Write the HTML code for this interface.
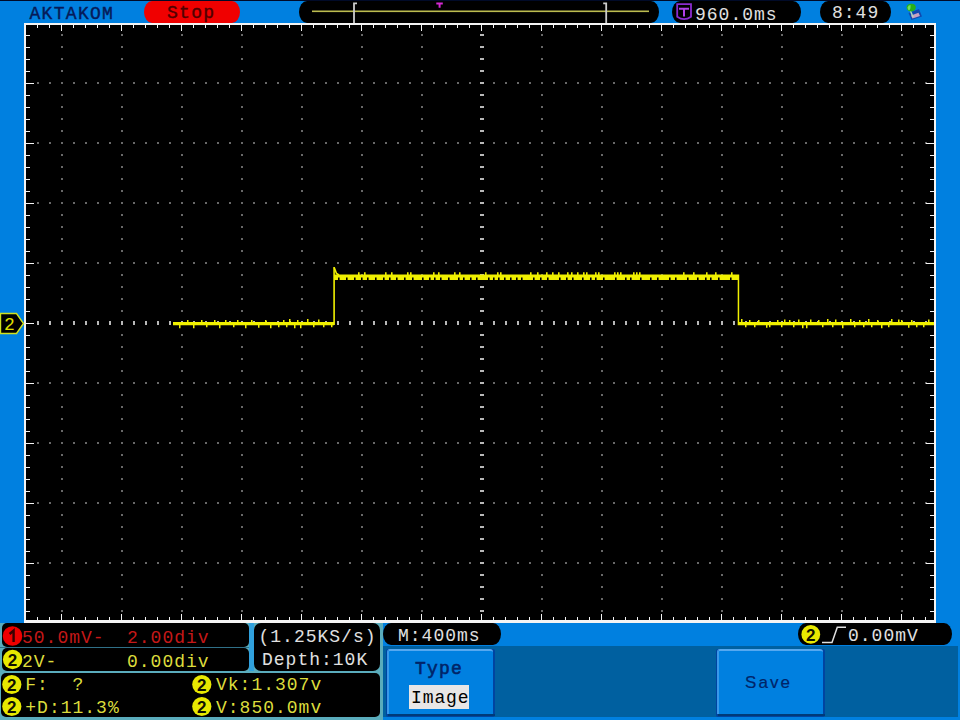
<!DOCTYPE html>
<html><head><meta charset="utf-8"><style>
html,body{margin:0;padding:0;}
body{width:960px;height:720px;overflow:hidden;position:relative;background:#0080e0;font-family:"Liberation Mono",monospace;}
.a{position:absolute;}
.t{position:absolute;font-family:"Liberation Mono",monospace;font-size:18px;letter-spacing:1px;line-height:18px;white-space:pre;}
svg{position:absolute;left:0;top:0;}
</style></head><body>

<div class="a" style="left:0;top:0;width:960px;height:1px;background:#000a28"></div>
<svg width="960" height="720" viewBox="0 0 960 720" shape-rendering="crispEdges">
<rect x="24" y="23" width="912" height="599" fill="#000"/>
<path d="M61 34h2v2h-2zM61 46h2v2h-2zM61 58h2v2h-2zM61 70h2v2h-2zM61 82h2v2h-2zM61 94h2v2h-2zM61 106h2v2h-2zM61 118h2v2h-2zM61 130h2v2h-2zM61 142h2v2h-2zM61 154h2v2h-2zM61 166h2v2h-2zM61 178h2v2h-2zM61 190h2v2h-2zM61 202h2v2h-2zM61 214h2v2h-2zM61 226h2v2h-2zM61 238h2v2h-2zM61 250h2v2h-2zM61 262h2v2h-2zM61 274h2v2h-2zM61 286h2v2h-2zM61 298h2v2h-2zM61 310h2v2h-2zM61 322h2v2h-2zM61 334h2v2h-2zM61 346h2v2h-2zM61 358h2v2h-2zM61 370h2v2h-2zM61 382h2v2h-2zM61 394h2v2h-2zM61 406h2v2h-2zM61 418h2v2h-2zM61 430h2v2h-2zM61 442h2v2h-2zM61 454h2v2h-2zM61 466h2v2h-2zM61 478h2v2h-2zM61 490h2v2h-2zM61 502h2v2h-2zM61 514h2v2h-2zM61 526h2v2h-2zM61 538h2v2h-2zM61 550h2v2h-2zM61 562h2v2h-2zM61 574h2v2h-2zM61 586h2v2h-2zM61 598h2v2h-2zM61 610h2v2h-2zM121 34h2v2h-2zM121 46h2v2h-2zM121 58h2v2h-2zM121 70h2v2h-2zM121 82h2v2h-2zM121 94h2v2h-2zM121 106h2v2h-2zM121 118h2v2h-2zM121 130h2v2h-2zM121 142h2v2h-2zM121 154h2v2h-2zM121 166h2v2h-2zM121 178h2v2h-2zM121 190h2v2h-2zM121 202h2v2h-2zM121 214h2v2h-2zM121 226h2v2h-2zM121 238h2v2h-2zM121 250h2v2h-2zM121 262h2v2h-2zM121 274h2v2h-2zM121 286h2v2h-2zM121 298h2v2h-2zM121 310h2v2h-2zM121 322h2v2h-2zM121 334h2v2h-2zM121 346h2v2h-2zM121 358h2v2h-2zM121 370h2v2h-2zM121 382h2v2h-2zM121 394h2v2h-2zM121 406h2v2h-2zM121 418h2v2h-2zM121 430h2v2h-2zM121 442h2v2h-2zM121 454h2v2h-2zM121 466h2v2h-2zM121 478h2v2h-2zM121 490h2v2h-2zM121 502h2v2h-2zM121 514h2v2h-2zM121 526h2v2h-2zM121 538h2v2h-2zM121 550h2v2h-2zM121 562h2v2h-2zM121 574h2v2h-2zM121 586h2v2h-2zM121 598h2v2h-2zM121 610h2v2h-2zM181 34h2v2h-2zM181 46h2v2h-2zM181 58h2v2h-2zM181 70h2v2h-2zM181 82h2v2h-2zM181 94h2v2h-2zM181 106h2v2h-2zM181 118h2v2h-2zM181 130h2v2h-2zM181 142h2v2h-2zM181 154h2v2h-2zM181 166h2v2h-2zM181 178h2v2h-2zM181 190h2v2h-2zM181 202h2v2h-2zM181 214h2v2h-2zM181 226h2v2h-2zM181 238h2v2h-2zM181 250h2v2h-2zM181 262h2v2h-2zM181 274h2v2h-2zM181 286h2v2h-2zM181 298h2v2h-2zM181 310h2v2h-2zM181 322h2v2h-2zM181 334h2v2h-2zM181 346h2v2h-2zM181 358h2v2h-2zM181 370h2v2h-2zM181 382h2v2h-2zM181 394h2v2h-2zM181 406h2v2h-2zM181 418h2v2h-2zM181 430h2v2h-2zM181 442h2v2h-2zM181 454h2v2h-2zM181 466h2v2h-2zM181 478h2v2h-2zM181 490h2v2h-2zM181 502h2v2h-2zM181 514h2v2h-2zM181 526h2v2h-2zM181 538h2v2h-2zM181 550h2v2h-2zM181 562h2v2h-2zM181 574h2v2h-2zM181 586h2v2h-2zM181 598h2v2h-2zM181 610h2v2h-2zM241 34h2v2h-2zM241 46h2v2h-2zM241 58h2v2h-2zM241 70h2v2h-2zM241 82h2v2h-2zM241 94h2v2h-2zM241 106h2v2h-2zM241 118h2v2h-2zM241 130h2v2h-2zM241 142h2v2h-2zM241 154h2v2h-2zM241 166h2v2h-2zM241 178h2v2h-2zM241 190h2v2h-2zM241 202h2v2h-2zM241 214h2v2h-2zM241 226h2v2h-2zM241 238h2v2h-2zM241 250h2v2h-2zM241 262h2v2h-2zM241 274h2v2h-2zM241 286h2v2h-2zM241 298h2v2h-2zM241 310h2v2h-2zM241 322h2v2h-2zM241 334h2v2h-2zM241 346h2v2h-2zM241 358h2v2h-2zM241 370h2v2h-2zM241 382h2v2h-2zM241 394h2v2h-2zM241 406h2v2h-2zM241 418h2v2h-2zM241 430h2v2h-2zM241 442h2v2h-2zM241 454h2v2h-2zM241 466h2v2h-2zM241 478h2v2h-2zM241 490h2v2h-2zM241 502h2v2h-2zM241 514h2v2h-2zM241 526h2v2h-2zM241 538h2v2h-2zM241 550h2v2h-2zM241 562h2v2h-2zM241 574h2v2h-2zM241 586h2v2h-2zM241 598h2v2h-2zM241 610h2v2h-2zM301 34h2v2h-2zM301 46h2v2h-2zM301 58h2v2h-2zM301 70h2v2h-2zM301 82h2v2h-2zM301 94h2v2h-2zM301 106h2v2h-2zM301 118h2v2h-2zM301 130h2v2h-2zM301 142h2v2h-2zM301 154h2v2h-2zM301 166h2v2h-2zM301 178h2v2h-2zM301 190h2v2h-2zM301 202h2v2h-2zM301 214h2v2h-2zM301 226h2v2h-2zM301 238h2v2h-2zM301 250h2v2h-2zM301 262h2v2h-2zM301 274h2v2h-2zM301 286h2v2h-2zM301 298h2v2h-2zM301 310h2v2h-2zM301 322h2v2h-2zM301 334h2v2h-2zM301 346h2v2h-2zM301 358h2v2h-2zM301 370h2v2h-2zM301 382h2v2h-2zM301 394h2v2h-2zM301 406h2v2h-2zM301 418h2v2h-2zM301 430h2v2h-2zM301 442h2v2h-2zM301 454h2v2h-2zM301 466h2v2h-2zM301 478h2v2h-2zM301 490h2v2h-2zM301 502h2v2h-2zM301 514h2v2h-2zM301 526h2v2h-2zM301 538h2v2h-2zM301 550h2v2h-2zM301 562h2v2h-2zM301 574h2v2h-2zM301 586h2v2h-2zM301 598h2v2h-2zM301 610h2v2h-2zM361 34h2v2h-2zM361 46h2v2h-2zM361 58h2v2h-2zM361 70h2v2h-2zM361 82h2v2h-2zM361 94h2v2h-2zM361 106h2v2h-2zM361 118h2v2h-2zM361 130h2v2h-2zM361 142h2v2h-2zM361 154h2v2h-2zM361 166h2v2h-2zM361 178h2v2h-2zM361 190h2v2h-2zM361 202h2v2h-2zM361 214h2v2h-2zM361 226h2v2h-2zM361 238h2v2h-2zM361 250h2v2h-2zM361 262h2v2h-2zM361 274h2v2h-2zM361 286h2v2h-2zM361 298h2v2h-2zM361 310h2v2h-2zM361 322h2v2h-2zM361 334h2v2h-2zM361 346h2v2h-2zM361 358h2v2h-2zM361 370h2v2h-2zM361 382h2v2h-2zM361 394h2v2h-2zM361 406h2v2h-2zM361 418h2v2h-2zM361 430h2v2h-2zM361 442h2v2h-2zM361 454h2v2h-2zM361 466h2v2h-2zM361 478h2v2h-2zM361 490h2v2h-2zM361 502h2v2h-2zM361 514h2v2h-2zM361 526h2v2h-2zM361 538h2v2h-2zM361 550h2v2h-2zM361 562h2v2h-2zM361 574h2v2h-2zM361 586h2v2h-2zM361 598h2v2h-2zM361 610h2v2h-2zM421 34h2v2h-2zM421 46h2v2h-2zM421 58h2v2h-2zM421 70h2v2h-2zM421 82h2v2h-2zM421 94h2v2h-2zM421 106h2v2h-2zM421 118h2v2h-2zM421 130h2v2h-2zM421 142h2v2h-2zM421 154h2v2h-2zM421 166h2v2h-2zM421 178h2v2h-2zM421 190h2v2h-2zM421 202h2v2h-2zM421 214h2v2h-2zM421 226h2v2h-2zM421 238h2v2h-2zM421 250h2v2h-2zM421 262h2v2h-2zM421 274h2v2h-2zM421 286h2v2h-2zM421 298h2v2h-2zM421 310h2v2h-2zM421 322h2v2h-2zM421 334h2v2h-2zM421 346h2v2h-2zM421 358h2v2h-2zM421 370h2v2h-2zM421 382h2v2h-2zM421 394h2v2h-2zM421 406h2v2h-2zM421 418h2v2h-2zM421 430h2v2h-2zM421 442h2v2h-2zM421 454h2v2h-2zM421 466h2v2h-2zM421 478h2v2h-2zM421 490h2v2h-2zM421 502h2v2h-2zM421 514h2v2h-2zM421 526h2v2h-2zM421 538h2v2h-2zM421 550h2v2h-2zM421 562h2v2h-2zM421 574h2v2h-2zM421 586h2v2h-2zM421 598h2v2h-2zM421 610h2v2h-2zM541 34h2v2h-2zM541 46h2v2h-2zM541 58h2v2h-2zM541 70h2v2h-2zM541 82h2v2h-2zM541 94h2v2h-2zM541 106h2v2h-2zM541 118h2v2h-2zM541 130h2v2h-2zM541 142h2v2h-2zM541 154h2v2h-2zM541 166h2v2h-2zM541 178h2v2h-2zM541 190h2v2h-2zM541 202h2v2h-2zM541 214h2v2h-2zM541 226h2v2h-2zM541 238h2v2h-2zM541 250h2v2h-2zM541 262h2v2h-2zM541 274h2v2h-2zM541 286h2v2h-2zM541 298h2v2h-2zM541 310h2v2h-2zM541 322h2v2h-2zM541 334h2v2h-2zM541 346h2v2h-2zM541 358h2v2h-2zM541 370h2v2h-2zM541 382h2v2h-2zM541 394h2v2h-2zM541 406h2v2h-2zM541 418h2v2h-2zM541 430h2v2h-2zM541 442h2v2h-2zM541 454h2v2h-2zM541 466h2v2h-2zM541 478h2v2h-2zM541 490h2v2h-2zM541 502h2v2h-2zM541 514h2v2h-2zM541 526h2v2h-2zM541 538h2v2h-2zM541 550h2v2h-2zM541 562h2v2h-2zM541 574h2v2h-2zM541 586h2v2h-2zM541 598h2v2h-2zM541 610h2v2h-2zM601 34h2v2h-2zM601 46h2v2h-2zM601 58h2v2h-2zM601 70h2v2h-2zM601 82h2v2h-2zM601 94h2v2h-2zM601 106h2v2h-2zM601 118h2v2h-2zM601 130h2v2h-2zM601 142h2v2h-2zM601 154h2v2h-2zM601 166h2v2h-2zM601 178h2v2h-2zM601 190h2v2h-2zM601 202h2v2h-2zM601 214h2v2h-2zM601 226h2v2h-2zM601 238h2v2h-2zM601 250h2v2h-2zM601 262h2v2h-2zM601 274h2v2h-2zM601 286h2v2h-2zM601 298h2v2h-2zM601 310h2v2h-2zM601 322h2v2h-2zM601 334h2v2h-2zM601 346h2v2h-2zM601 358h2v2h-2zM601 370h2v2h-2zM601 382h2v2h-2zM601 394h2v2h-2zM601 406h2v2h-2zM601 418h2v2h-2zM601 430h2v2h-2zM601 442h2v2h-2zM601 454h2v2h-2zM601 466h2v2h-2zM601 478h2v2h-2zM601 490h2v2h-2zM601 502h2v2h-2zM601 514h2v2h-2zM601 526h2v2h-2zM601 538h2v2h-2zM601 550h2v2h-2zM601 562h2v2h-2zM601 574h2v2h-2zM601 586h2v2h-2zM601 598h2v2h-2zM601 610h2v2h-2zM661 34h2v2h-2zM661 46h2v2h-2zM661 58h2v2h-2zM661 70h2v2h-2zM661 82h2v2h-2zM661 94h2v2h-2zM661 106h2v2h-2zM661 118h2v2h-2zM661 130h2v2h-2zM661 142h2v2h-2zM661 154h2v2h-2zM661 166h2v2h-2zM661 178h2v2h-2zM661 190h2v2h-2zM661 202h2v2h-2zM661 214h2v2h-2zM661 226h2v2h-2zM661 238h2v2h-2zM661 250h2v2h-2zM661 262h2v2h-2zM661 274h2v2h-2zM661 286h2v2h-2zM661 298h2v2h-2zM661 310h2v2h-2zM661 322h2v2h-2zM661 334h2v2h-2zM661 346h2v2h-2zM661 358h2v2h-2zM661 370h2v2h-2zM661 382h2v2h-2zM661 394h2v2h-2zM661 406h2v2h-2zM661 418h2v2h-2zM661 430h2v2h-2zM661 442h2v2h-2zM661 454h2v2h-2zM661 466h2v2h-2zM661 478h2v2h-2zM661 490h2v2h-2zM661 502h2v2h-2zM661 514h2v2h-2zM661 526h2v2h-2zM661 538h2v2h-2zM661 550h2v2h-2zM661 562h2v2h-2zM661 574h2v2h-2zM661 586h2v2h-2zM661 598h2v2h-2zM661 610h2v2h-2zM721 34h2v2h-2zM721 46h2v2h-2zM721 58h2v2h-2zM721 70h2v2h-2zM721 82h2v2h-2zM721 94h2v2h-2zM721 106h2v2h-2zM721 118h2v2h-2zM721 130h2v2h-2zM721 142h2v2h-2zM721 154h2v2h-2zM721 166h2v2h-2zM721 178h2v2h-2zM721 190h2v2h-2zM721 202h2v2h-2zM721 214h2v2h-2zM721 226h2v2h-2zM721 238h2v2h-2zM721 250h2v2h-2zM721 262h2v2h-2zM721 274h2v2h-2zM721 286h2v2h-2zM721 298h2v2h-2zM721 310h2v2h-2zM721 322h2v2h-2zM721 334h2v2h-2zM721 346h2v2h-2zM721 358h2v2h-2zM721 370h2v2h-2zM721 382h2v2h-2zM721 394h2v2h-2zM721 406h2v2h-2zM721 418h2v2h-2zM721 430h2v2h-2zM721 442h2v2h-2zM721 454h2v2h-2zM721 466h2v2h-2zM721 478h2v2h-2zM721 490h2v2h-2zM721 502h2v2h-2zM721 514h2v2h-2zM721 526h2v2h-2zM721 538h2v2h-2zM721 550h2v2h-2zM721 562h2v2h-2zM721 574h2v2h-2zM721 586h2v2h-2zM721 598h2v2h-2zM721 610h2v2h-2zM781 34h2v2h-2zM781 46h2v2h-2zM781 58h2v2h-2zM781 70h2v2h-2zM781 82h2v2h-2zM781 94h2v2h-2zM781 106h2v2h-2zM781 118h2v2h-2zM781 130h2v2h-2zM781 142h2v2h-2zM781 154h2v2h-2zM781 166h2v2h-2zM781 178h2v2h-2zM781 190h2v2h-2zM781 202h2v2h-2zM781 214h2v2h-2zM781 226h2v2h-2zM781 238h2v2h-2zM781 250h2v2h-2zM781 262h2v2h-2zM781 274h2v2h-2zM781 286h2v2h-2zM781 298h2v2h-2zM781 310h2v2h-2zM781 322h2v2h-2zM781 334h2v2h-2zM781 346h2v2h-2zM781 358h2v2h-2zM781 370h2v2h-2zM781 382h2v2h-2zM781 394h2v2h-2zM781 406h2v2h-2zM781 418h2v2h-2zM781 430h2v2h-2zM781 442h2v2h-2zM781 454h2v2h-2zM781 466h2v2h-2zM781 478h2v2h-2zM781 490h2v2h-2zM781 502h2v2h-2zM781 514h2v2h-2zM781 526h2v2h-2zM781 538h2v2h-2zM781 550h2v2h-2zM781 562h2v2h-2zM781 574h2v2h-2zM781 586h2v2h-2zM781 598h2v2h-2zM781 610h2v2h-2zM841 34h2v2h-2zM841 46h2v2h-2zM841 58h2v2h-2zM841 70h2v2h-2zM841 82h2v2h-2zM841 94h2v2h-2zM841 106h2v2h-2zM841 118h2v2h-2zM841 130h2v2h-2zM841 142h2v2h-2zM841 154h2v2h-2zM841 166h2v2h-2zM841 178h2v2h-2zM841 190h2v2h-2zM841 202h2v2h-2zM841 214h2v2h-2zM841 226h2v2h-2zM841 238h2v2h-2zM841 250h2v2h-2zM841 262h2v2h-2zM841 274h2v2h-2zM841 286h2v2h-2zM841 298h2v2h-2zM841 310h2v2h-2zM841 322h2v2h-2zM841 334h2v2h-2zM841 346h2v2h-2zM841 358h2v2h-2zM841 370h2v2h-2zM841 382h2v2h-2zM841 394h2v2h-2zM841 406h2v2h-2zM841 418h2v2h-2zM841 430h2v2h-2zM841 442h2v2h-2zM841 454h2v2h-2zM841 466h2v2h-2zM841 478h2v2h-2zM841 490h2v2h-2zM841 502h2v2h-2zM841 514h2v2h-2zM841 526h2v2h-2zM841 538h2v2h-2zM841 550h2v2h-2zM841 562h2v2h-2zM841 574h2v2h-2zM841 586h2v2h-2zM841 598h2v2h-2zM841 610h2v2h-2zM901 34h2v2h-2zM901 46h2v2h-2zM901 58h2v2h-2zM901 70h2v2h-2zM901 82h2v2h-2zM901 94h2v2h-2zM901 106h2v2h-2zM901 118h2v2h-2zM901 130h2v2h-2zM901 142h2v2h-2zM901 154h2v2h-2zM901 166h2v2h-2zM901 178h2v2h-2zM901 190h2v2h-2zM901 202h2v2h-2zM901 214h2v2h-2zM901 226h2v2h-2zM901 238h2v2h-2zM901 250h2v2h-2zM901 262h2v2h-2zM901 274h2v2h-2zM901 286h2v2h-2zM901 298h2v2h-2zM901 310h2v2h-2zM901 322h2v2h-2zM901 334h2v2h-2zM901 346h2v2h-2zM901 358h2v2h-2zM901 370h2v2h-2zM901 382h2v2h-2zM901 394h2v2h-2zM901 406h2v2h-2zM901 418h2v2h-2zM901 430h2v2h-2zM901 442h2v2h-2zM901 454h2v2h-2zM901 466h2v2h-2zM901 478h2v2h-2zM901 490h2v2h-2zM901 502h2v2h-2zM901 514h2v2h-2zM901 526h2v2h-2zM901 538h2v2h-2zM901 550h2v2h-2zM901 562h2v2h-2zM901 574h2v2h-2zM901 586h2v2h-2zM901 598h2v2h-2zM901 610h2v2h-2zM37 82h2v2h-2zM49 82h2v2h-2zM61 82h2v2h-2zM73 82h2v2h-2zM85 82h2v2h-2zM97 82h2v2h-2zM109 82h2v2h-2zM121 82h2v2h-2zM133 82h2v2h-2zM145 82h2v2h-2zM157 82h2v2h-2zM169 82h2v2h-2zM181 82h2v2h-2zM193 82h2v2h-2zM205 82h2v2h-2zM217 82h2v2h-2zM229 82h2v2h-2zM241 82h2v2h-2zM253 82h2v2h-2zM265 82h2v2h-2zM277 82h2v2h-2zM289 82h2v2h-2zM301 82h2v2h-2zM313 82h2v2h-2zM325 82h2v2h-2zM337 82h2v2h-2zM349 82h2v2h-2zM361 82h2v2h-2zM373 82h2v2h-2zM385 82h2v2h-2zM397 82h2v2h-2zM409 82h2v2h-2zM421 82h2v2h-2zM433 82h2v2h-2zM445 82h2v2h-2zM457 82h2v2h-2zM469 82h2v2h-2zM481 82h2v2h-2zM493 82h2v2h-2zM505 82h2v2h-2zM517 82h2v2h-2zM529 82h2v2h-2zM541 82h2v2h-2zM553 82h2v2h-2zM565 82h2v2h-2zM577 82h2v2h-2zM589 82h2v2h-2zM601 82h2v2h-2zM613 82h2v2h-2zM625 82h2v2h-2zM637 82h2v2h-2zM649 82h2v2h-2zM661 82h2v2h-2zM673 82h2v2h-2zM685 82h2v2h-2zM697 82h2v2h-2zM709 82h2v2h-2zM721 82h2v2h-2zM733 82h2v2h-2zM745 82h2v2h-2zM757 82h2v2h-2zM769 82h2v2h-2zM781 82h2v2h-2zM793 82h2v2h-2zM805 82h2v2h-2zM817 82h2v2h-2zM829 82h2v2h-2zM841 82h2v2h-2zM853 82h2v2h-2zM865 82h2v2h-2zM877 82h2v2h-2zM889 82h2v2h-2zM901 82h2v2h-2zM913 82h2v2h-2zM925 82h2v2h-2zM37 142h2v2h-2zM49 142h2v2h-2zM61 142h2v2h-2zM73 142h2v2h-2zM85 142h2v2h-2zM97 142h2v2h-2zM109 142h2v2h-2zM121 142h2v2h-2zM133 142h2v2h-2zM145 142h2v2h-2zM157 142h2v2h-2zM169 142h2v2h-2zM181 142h2v2h-2zM193 142h2v2h-2zM205 142h2v2h-2zM217 142h2v2h-2zM229 142h2v2h-2zM241 142h2v2h-2zM253 142h2v2h-2zM265 142h2v2h-2zM277 142h2v2h-2zM289 142h2v2h-2zM301 142h2v2h-2zM313 142h2v2h-2zM325 142h2v2h-2zM337 142h2v2h-2zM349 142h2v2h-2zM361 142h2v2h-2zM373 142h2v2h-2zM385 142h2v2h-2zM397 142h2v2h-2zM409 142h2v2h-2zM421 142h2v2h-2zM433 142h2v2h-2zM445 142h2v2h-2zM457 142h2v2h-2zM469 142h2v2h-2zM481 142h2v2h-2zM493 142h2v2h-2zM505 142h2v2h-2zM517 142h2v2h-2zM529 142h2v2h-2zM541 142h2v2h-2zM553 142h2v2h-2zM565 142h2v2h-2zM577 142h2v2h-2zM589 142h2v2h-2zM601 142h2v2h-2zM613 142h2v2h-2zM625 142h2v2h-2zM637 142h2v2h-2zM649 142h2v2h-2zM661 142h2v2h-2zM673 142h2v2h-2zM685 142h2v2h-2zM697 142h2v2h-2zM709 142h2v2h-2zM721 142h2v2h-2zM733 142h2v2h-2zM745 142h2v2h-2zM757 142h2v2h-2zM769 142h2v2h-2zM781 142h2v2h-2zM793 142h2v2h-2zM805 142h2v2h-2zM817 142h2v2h-2zM829 142h2v2h-2zM841 142h2v2h-2zM853 142h2v2h-2zM865 142h2v2h-2zM877 142h2v2h-2zM889 142h2v2h-2zM901 142h2v2h-2zM913 142h2v2h-2zM925 142h2v2h-2zM37 202h2v2h-2zM49 202h2v2h-2zM61 202h2v2h-2zM73 202h2v2h-2zM85 202h2v2h-2zM97 202h2v2h-2zM109 202h2v2h-2zM121 202h2v2h-2zM133 202h2v2h-2zM145 202h2v2h-2zM157 202h2v2h-2zM169 202h2v2h-2zM181 202h2v2h-2zM193 202h2v2h-2zM205 202h2v2h-2zM217 202h2v2h-2zM229 202h2v2h-2zM241 202h2v2h-2zM253 202h2v2h-2zM265 202h2v2h-2zM277 202h2v2h-2zM289 202h2v2h-2zM301 202h2v2h-2zM313 202h2v2h-2zM325 202h2v2h-2zM337 202h2v2h-2zM349 202h2v2h-2zM361 202h2v2h-2zM373 202h2v2h-2zM385 202h2v2h-2zM397 202h2v2h-2zM409 202h2v2h-2zM421 202h2v2h-2zM433 202h2v2h-2zM445 202h2v2h-2zM457 202h2v2h-2zM469 202h2v2h-2zM481 202h2v2h-2zM493 202h2v2h-2zM505 202h2v2h-2zM517 202h2v2h-2zM529 202h2v2h-2zM541 202h2v2h-2zM553 202h2v2h-2zM565 202h2v2h-2zM577 202h2v2h-2zM589 202h2v2h-2zM601 202h2v2h-2zM613 202h2v2h-2zM625 202h2v2h-2zM637 202h2v2h-2zM649 202h2v2h-2zM661 202h2v2h-2zM673 202h2v2h-2zM685 202h2v2h-2zM697 202h2v2h-2zM709 202h2v2h-2zM721 202h2v2h-2zM733 202h2v2h-2zM745 202h2v2h-2zM757 202h2v2h-2zM769 202h2v2h-2zM781 202h2v2h-2zM793 202h2v2h-2zM805 202h2v2h-2zM817 202h2v2h-2zM829 202h2v2h-2zM841 202h2v2h-2zM853 202h2v2h-2zM865 202h2v2h-2zM877 202h2v2h-2zM889 202h2v2h-2zM901 202h2v2h-2zM913 202h2v2h-2zM925 202h2v2h-2zM37 262h2v2h-2zM49 262h2v2h-2zM61 262h2v2h-2zM73 262h2v2h-2zM85 262h2v2h-2zM97 262h2v2h-2zM109 262h2v2h-2zM121 262h2v2h-2zM133 262h2v2h-2zM145 262h2v2h-2zM157 262h2v2h-2zM169 262h2v2h-2zM181 262h2v2h-2zM193 262h2v2h-2zM205 262h2v2h-2zM217 262h2v2h-2zM229 262h2v2h-2zM241 262h2v2h-2zM253 262h2v2h-2zM265 262h2v2h-2zM277 262h2v2h-2zM289 262h2v2h-2zM301 262h2v2h-2zM313 262h2v2h-2zM325 262h2v2h-2zM337 262h2v2h-2zM349 262h2v2h-2zM361 262h2v2h-2zM373 262h2v2h-2zM385 262h2v2h-2zM397 262h2v2h-2zM409 262h2v2h-2zM421 262h2v2h-2zM433 262h2v2h-2zM445 262h2v2h-2zM457 262h2v2h-2zM469 262h2v2h-2zM481 262h2v2h-2zM493 262h2v2h-2zM505 262h2v2h-2zM517 262h2v2h-2zM529 262h2v2h-2zM541 262h2v2h-2zM553 262h2v2h-2zM565 262h2v2h-2zM577 262h2v2h-2zM589 262h2v2h-2zM601 262h2v2h-2zM613 262h2v2h-2zM625 262h2v2h-2zM637 262h2v2h-2zM649 262h2v2h-2zM661 262h2v2h-2zM673 262h2v2h-2zM685 262h2v2h-2zM697 262h2v2h-2zM709 262h2v2h-2zM721 262h2v2h-2zM733 262h2v2h-2zM745 262h2v2h-2zM757 262h2v2h-2zM769 262h2v2h-2zM781 262h2v2h-2zM793 262h2v2h-2zM805 262h2v2h-2zM817 262h2v2h-2zM829 262h2v2h-2zM841 262h2v2h-2zM853 262h2v2h-2zM865 262h2v2h-2zM877 262h2v2h-2zM889 262h2v2h-2zM901 262h2v2h-2zM913 262h2v2h-2zM925 262h2v2h-2zM37 382h2v2h-2zM49 382h2v2h-2zM61 382h2v2h-2zM73 382h2v2h-2zM85 382h2v2h-2zM97 382h2v2h-2zM109 382h2v2h-2zM121 382h2v2h-2zM133 382h2v2h-2zM145 382h2v2h-2zM157 382h2v2h-2zM169 382h2v2h-2zM181 382h2v2h-2zM193 382h2v2h-2zM205 382h2v2h-2zM217 382h2v2h-2zM229 382h2v2h-2zM241 382h2v2h-2zM253 382h2v2h-2zM265 382h2v2h-2zM277 382h2v2h-2zM289 382h2v2h-2zM301 382h2v2h-2zM313 382h2v2h-2zM325 382h2v2h-2zM337 382h2v2h-2zM349 382h2v2h-2zM361 382h2v2h-2zM373 382h2v2h-2zM385 382h2v2h-2zM397 382h2v2h-2zM409 382h2v2h-2zM421 382h2v2h-2zM433 382h2v2h-2zM445 382h2v2h-2zM457 382h2v2h-2zM469 382h2v2h-2zM481 382h2v2h-2zM493 382h2v2h-2zM505 382h2v2h-2zM517 382h2v2h-2zM529 382h2v2h-2zM541 382h2v2h-2zM553 382h2v2h-2zM565 382h2v2h-2zM577 382h2v2h-2zM589 382h2v2h-2zM601 382h2v2h-2zM613 382h2v2h-2zM625 382h2v2h-2zM637 382h2v2h-2zM649 382h2v2h-2zM661 382h2v2h-2zM673 382h2v2h-2zM685 382h2v2h-2zM697 382h2v2h-2zM709 382h2v2h-2zM721 382h2v2h-2zM733 382h2v2h-2zM745 382h2v2h-2zM757 382h2v2h-2zM769 382h2v2h-2zM781 382h2v2h-2zM793 382h2v2h-2zM805 382h2v2h-2zM817 382h2v2h-2zM829 382h2v2h-2zM841 382h2v2h-2zM853 382h2v2h-2zM865 382h2v2h-2zM877 382h2v2h-2zM889 382h2v2h-2zM901 382h2v2h-2zM913 382h2v2h-2zM925 382h2v2h-2zM37 442h2v2h-2zM49 442h2v2h-2zM61 442h2v2h-2zM73 442h2v2h-2zM85 442h2v2h-2zM97 442h2v2h-2zM109 442h2v2h-2zM121 442h2v2h-2zM133 442h2v2h-2zM145 442h2v2h-2zM157 442h2v2h-2zM169 442h2v2h-2zM181 442h2v2h-2zM193 442h2v2h-2zM205 442h2v2h-2zM217 442h2v2h-2zM229 442h2v2h-2zM241 442h2v2h-2zM253 442h2v2h-2zM265 442h2v2h-2zM277 442h2v2h-2zM289 442h2v2h-2zM301 442h2v2h-2zM313 442h2v2h-2zM325 442h2v2h-2zM337 442h2v2h-2zM349 442h2v2h-2zM361 442h2v2h-2zM373 442h2v2h-2zM385 442h2v2h-2zM397 442h2v2h-2zM409 442h2v2h-2zM421 442h2v2h-2zM433 442h2v2h-2zM445 442h2v2h-2zM457 442h2v2h-2zM469 442h2v2h-2zM481 442h2v2h-2zM493 442h2v2h-2zM505 442h2v2h-2zM517 442h2v2h-2zM529 442h2v2h-2zM541 442h2v2h-2zM553 442h2v2h-2zM565 442h2v2h-2zM577 442h2v2h-2zM589 442h2v2h-2zM601 442h2v2h-2zM613 442h2v2h-2zM625 442h2v2h-2zM637 442h2v2h-2zM649 442h2v2h-2zM661 442h2v2h-2zM673 442h2v2h-2zM685 442h2v2h-2zM697 442h2v2h-2zM709 442h2v2h-2zM721 442h2v2h-2zM733 442h2v2h-2zM745 442h2v2h-2zM757 442h2v2h-2zM769 442h2v2h-2zM781 442h2v2h-2zM793 442h2v2h-2zM805 442h2v2h-2zM817 442h2v2h-2zM829 442h2v2h-2zM841 442h2v2h-2zM853 442h2v2h-2zM865 442h2v2h-2zM877 442h2v2h-2zM889 442h2v2h-2zM901 442h2v2h-2zM913 442h2v2h-2zM925 442h2v2h-2zM37 502h2v2h-2zM49 502h2v2h-2zM61 502h2v2h-2zM73 502h2v2h-2zM85 502h2v2h-2zM97 502h2v2h-2zM109 502h2v2h-2zM121 502h2v2h-2zM133 502h2v2h-2zM145 502h2v2h-2zM157 502h2v2h-2zM169 502h2v2h-2zM181 502h2v2h-2zM193 502h2v2h-2zM205 502h2v2h-2zM217 502h2v2h-2zM229 502h2v2h-2zM241 502h2v2h-2zM253 502h2v2h-2zM265 502h2v2h-2zM277 502h2v2h-2zM289 502h2v2h-2zM301 502h2v2h-2zM313 502h2v2h-2zM325 502h2v2h-2zM337 502h2v2h-2zM349 502h2v2h-2zM361 502h2v2h-2zM373 502h2v2h-2zM385 502h2v2h-2zM397 502h2v2h-2zM409 502h2v2h-2zM421 502h2v2h-2zM433 502h2v2h-2zM445 502h2v2h-2zM457 502h2v2h-2zM469 502h2v2h-2zM481 502h2v2h-2zM493 502h2v2h-2zM505 502h2v2h-2zM517 502h2v2h-2zM529 502h2v2h-2zM541 502h2v2h-2zM553 502h2v2h-2zM565 502h2v2h-2zM577 502h2v2h-2zM589 502h2v2h-2zM601 502h2v2h-2zM613 502h2v2h-2zM625 502h2v2h-2zM637 502h2v2h-2zM649 502h2v2h-2zM661 502h2v2h-2zM673 502h2v2h-2zM685 502h2v2h-2zM697 502h2v2h-2zM709 502h2v2h-2zM721 502h2v2h-2zM733 502h2v2h-2zM745 502h2v2h-2zM757 502h2v2h-2zM769 502h2v2h-2zM781 502h2v2h-2zM793 502h2v2h-2zM805 502h2v2h-2zM817 502h2v2h-2zM829 502h2v2h-2zM841 502h2v2h-2zM853 502h2v2h-2zM865 502h2v2h-2zM877 502h2v2h-2zM889 502h2v2h-2zM901 502h2v2h-2zM913 502h2v2h-2zM925 502h2v2h-2zM37 562h2v2h-2zM49 562h2v2h-2zM61 562h2v2h-2zM73 562h2v2h-2zM85 562h2v2h-2zM97 562h2v2h-2zM109 562h2v2h-2zM121 562h2v2h-2zM133 562h2v2h-2zM145 562h2v2h-2zM157 562h2v2h-2zM169 562h2v2h-2zM181 562h2v2h-2zM193 562h2v2h-2zM205 562h2v2h-2zM217 562h2v2h-2zM229 562h2v2h-2zM241 562h2v2h-2zM253 562h2v2h-2zM265 562h2v2h-2zM277 562h2v2h-2zM289 562h2v2h-2zM301 562h2v2h-2zM313 562h2v2h-2zM325 562h2v2h-2zM337 562h2v2h-2zM349 562h2v2h-2zM361 562h2v2h-2zM373 562h2v2h-2zM385 562h2v2h-2zM397 562h2v2h-2zM409 562h2v2h-2zM421 562h2v2h-2zM433 562h2v2h-2zM445 562h2v2h-2zM457 562h2v2h-2zM469 562h2v2h-2zM481 562h2v2h-2zM493 562h2v2h-2zM505 562h2v2h-2zM517 562h2v2h-2zM529 562h2v2h-2zM541 562h2v2h-2zM553 562h2v2h-2zM565 562h2v2h-2zM577 562h2v2h-2zM589 562h2v2h-2zM601 562h2v2h-2zM613 562h2v2h-2zM625 562h2v2h-2zM637 562h2v2h-2zM649 562h2v2h-2zM661 562h2v2h-2zM673 562h2v2h-2zM685 562h2v2h-2zM697 562h2v2h-2zM709 562h2v2h-2zM721 562h2v2h-2zM733 562h2v2h-2zM745 562h2v2h-2zM757 562h2v2h-2zM769 562h2v2h-2zM781 562h2v2h-2zM793 562h2v2h-2zM805 562h2v2h-2zM817 562h2v2h-2zM829 562h2v2h-2zM841 562h2v2h-2zM853 562h2v2h-2zM865 562h2v2h-2zM877 562h2v2h-2zM889 562h2v2h-2zM901 562h2v2h-2zM913 562h2v2h-2zM925 562h2v2h-2z" fill="#686868"/>
<path d="M480 34h4v2h-4zM480 46h4v2h-4zM480 58h4v2h-4zM480 70h4v2h-4zM480 82h4v2h-4zM480 94h4v2h-4zM480 106h4v2h-4zM480 118h4v2h-4zM480 130h4v2h-4zM480 142h4v2h-4zM480 154h4v2h-4zM480 166h4v2h-4zM480 178h4v2h-4zM480 190h4v2h-4zM480 202h4v2h-4zM480 214h4v2h-4zM480 226h4v2h-4zM480 238h4v2h-4zM480 250h4v2h-4zM480 262h4v2h-4zM480 274h4v2h-4zM480 286h4v2h-4zM480 298h4v2h-4zM480 310h4v2h-4zM480 334h4v2h-4zM480 346h4v2h-4zM480 358h4v2h-4zM480 370h4v2h-4zM480 382h4v2h-4zM480 394h4v2h-4zM480 406h4v2h-4zM480 418h4v2h-4zM480 430h4v2h-4zM480 442h4v2h-4zM480 454h4v2h-4zM480 466h4v2h-4zM480 478h4v2h-4zM480 490h4v2h-4zM480 502h4v2h-4zM480 514h4v2h-4zM480 526h4v2h-4zM480 538h4v2h-4zM480 550h4v2h-4zM480 562h4v2h-4zM480 574h4v2h-4zM480 586h4v2h-4zM480 598h4v2h-4zM480 610h4v2h-4zM37 321h2v4h-2zM49 321h2v4h-2zM61 321h2v4h-2zM73 321h2v4h-2zM85 321h2v4h-2zM97 321h2v4h-2zM109 321h2v4h-2zM121 321h2v4h-2zM133 321h2v4h-2zM145 321h2v4h-2zM157 321h2v4h-2zM169 321h2v4h-2zM181 321h2v4h-2zM193 321h2v4h-2zM205 321h2v4h-2zM217 321h2v4h-2zM229 321h2v4h-2zM241 321h2v4h-2zM253 321h2v4h-2zM265 321h2v4h-2zM277 321h2v4h-2zM289 321h2v4h-2zM301 321h2v4h-2zM313 321h2v4h-2zM325 321h2v4h-2zM337 321h2v4h-2zM349 321h2v4h-2zM361 321h2v4h-2zM373 321h2v4h-2zM385 321h2v4h-2zM397 321h2v4h-2zM409 321h2v4h-2zM421 321h2v4h-2zM433 321h2v4h-2zM445 321h2v4h-2zM457 321h2v4h-2zM469 321h2v4h-2zM493 321h2v4h-2zM505 321h2v4h-2zM517 321h2v4h-2zM529 321h2v4h-2zM541 321h2v4h-2zM553 321h2v4h-2zM565 321h2v4h-2zM577 321h2v4h-2zM589 321h2v4h-2zM601 321h2v4h-2zM613 321h2v4h-2zM625 321h2v4h-2zM637 321h2v4h-2zM649 321h2v4h-2zM661 321h2v4h-2zM673 321h2v4h-2zM685 321h2v4h-2zM697 321h2v4h-2zM709 321h2v4h-2zM721 321h2v4h-2zM733 321h2v4h-2zM745 321h2v4h-2zM757 321h2v4h-2zM769 321h2v4h-2zM781 321h2v4h-2zM793 321h2v4h-2zM805 321h2v4h-2zM817 321h2v4h-2zM829 321h2v4h-2zM841 321h2v4h-2zM853 321h2v4h-2zM865 321h2v4h-2zM877 321h2v4h-2zM889 321h2v4h-2zM901 321h2v4h-2zM913 321h2v4h-2zM925 321h2v4h-2zM480 322h3v3h-3z" fill="#b8b8b8"/>
<path d="M24 23h912v2h-912zM24 620h912v3h-912zM24 23h2v599h-2zM934 23h2v599h-2zM37 25h1v3h-1zM37 617h1v3h-1zM49 25h1v3h-1zM49 617h1v3h-1zM61 25h1v6h-1zM61 614h1v6h-1zM73 25h1v3h-1zM73 617h1v3h-1zM85 25h1v3h-1zM85 617h1v3h-1zM97 25h1v3h-1zM97 617h1v3h-1zM109 25h1v3h-1zM109 617h1v3h-1zM121 25h1v6h-1zM121 614h1v6h-1zM133 25h1v3h-1zM133 617h1v3h-1zM145 25h1v3h-1zM145 617h1v3h-1zM157 25h1v3h-1zM157 617h1v3h-1zM169 25h1v3h-1zM169 617h1v3h-1zM181 25h1v6h-1zM181 614h1v6h-1zM193 25h1v3h-1zM193 617h1v3h-1zM205 25h1v3h-1zM205 617h1v3h-1zM217 25h1v3h-1zM217 617h1v3h-1zM229 25h1v3h-1zM229 617h1v3h-1zM241 25h1v6h-1zM241 614h1v6h-1zM253 25h1v3h-1zM253 617h1v3h-1zM265 25h1v3h-1zM265 617h1v3h-1zM277 25h1v3h-1zM277 617h1v3h-1zM289 25h1v3h-1zM289 617h1v3h-1zM301 25h1v6h-1zM301 614h1v6h-1zM313 25h1v3h-1zM313 617h1v3h-1zM325 25h1v3h-1zM325 617h1v3h-1zM337 25h1v3h-1zM337 617h1v3h-1zM349 25h1v3h-1zM349 617h1v3h-1zM361 25h1v6h-1zM361 614h1v6h-1zM373 25h1v3h-1zM373 617h1v3h-1zM385 25h1v3h-1zM385 617h1v3h-1zM397 25h1v3h-1zM397 617h1v3h-1zM409 25h1v3h-1zM409 617h1v3h-1zM421 25h1v6h-1zM421 614h1v6h-1zM433 25h1v3h-1zM433 617h1v3h-1zM445 25h1v3h-1zM445 617h1v3h-1zM457 25h1v3h-1zM457 617h1v3h-1zM469 25h1v3h-1zM469 617h1v3h-1zM481 25h1v6h-1zM481 614h1v6h-1zM493 25h1v3h-1zM493 617h1v3h-1zM505 25h1v3h-1zM505 617h1v3h-1zM517 25h1v3h-1zM517 617h1v3h-1zM529 25h1v3h-1zM529 617h1v3h-1zM541 25h1v6h-1zM541 614h1v6h-1zM553 25h1v3h-1zM553 617h1v3h-1zM565 25h1v3h-1zM565 617h1v3h-1zM577 25h1v3h-1zM577 617h1v3h-1zM589 25h1v3h-1zM589 617h1v3h-1zM601 25h1v6h-1zM601 614h1v6h-1zM613 25h1v3h-1zM613 617h1v3h-1zM625 25h1v3h-1zM625 617h1v3h-1zM637 25h1v3h-1zM637 617h1v3h-1zM649 25h1v3h-1zM649 617h1v3h-1zM661 25h1v6h-1zM661 614h1v6h-1zM673 25h1v3h-1zM673 617h1v3h-1zM685 25h1v3h-1zM685 617h1v3h-1zM697 25h1v3h-1zM697 617h1v3h-1zM709 25h1v3h-1zM709 617h1v3h-1zM721 25h1v6h-1zM721 614h1v6h-1zM733 25h1v3h-1zM733 617h1v3h-1zM745 25h1v3h-1zM745 617h1v3h-1zM757 25h1v3h-1zM757 617h1v3h-1zM769 25h1v3h-1zM769 617h1v3h-1zM781 25h1v6h-1zM781 614h1v6h-1zM793 25h1v3h-1zM793 617h1v3h-1zM805 25h1v3h-1zM805 617h1v3h-1zM817 25h1v3h-1zM817 617h1v3h-1zM829 25h1v3h-1zM829 617h1v3h-1zM841 25h1v6h-1zM841 614h1v6h-1zM853 25h1v3h-1zM853 617h1v3h-1zM865 25h1v3h-1zM865 617h1v3h-1zM877 25h1v3h-1zM877 617h1v3h-1zM889 25h1v3h-1zM889 617h1v3h-1zM901 25h1v6h-1zM901 614h1v6h-1zM913 25h1v3h-1zM913 617h1v3h-1zM925 25h1v3h-1zM925 617h1v3h-1zM26 35h4v1h-4zM930 35h4v1h-4zM26 47h4v1h-4zM930 47h4v1h-4zM26 59h4v1h-4zM930 59h4v1h-4zM26 71h4v1h-4zM930 71h4v1h-4zM26 83h8v1h-8zM926 83h8v1h-8zM26 95h4v1h-4zM930 95h4v1h-4zM26 107h4v1h-4zM930 107h4v1h-4zM26 119h4v1h-4zM930 119h4v1h-4zM26 131h4v1h-4zM930 131h4v1h-4zM26 143h8v1h-8zM926 143h8v1h-8zM26 155h4v1h-4zM930 155h4v1h-4zM26 167h4v1h-4zM930 167h4v1h-4zM26 179h4v1h-4zM930 179h4v1h-4zM26 191h4v1h-4zM930 191h4v1h-4zM26 203h8v1h-8zM926 203h8v1h-8zM26 215h4v1h-4zM930 215h4v1h-4zM26 227h4v1h-4zM930 227h4v1h-4zM26 239h4v1h-4zM930 239h4v1h-4zM26 251h4v1h-4zM930 251h4v1h-4zM26 263h8v1h-8zM926 263h8v1h-8zM26 275h4v1h-4zM930 275h4v1h-4zM26 287h4v1h-4zM930 287h4v1h-4zM26 299h4v1h-4zM930 299h4v1h-4zM26 311h4v1h-4zM930 311h4v1h-4zM26 323h8v1h-8zM926 323h8v1h-8zM26 335h4v1h-4zM930 335h4v1h-4zM26 347h4v1h-4zM930 347h4v1h-4zM26 359h4v1h-4zM930 359h4v1h-4zM26 371h4v1h-4zM930 371h4v1h-4zM26 383h8v1h-8zM926 383h8v1h-8zM26 395h4v1h-4zM930 395h4v1h-4zM26 407h4v1h-4zM930 407h4v1h-4zM26 419h4v1h-4zM930 419h4v1h-4zM26 431h4v1h-4zM930 431h4v1h-4zM26 443h8v1h-8zM926 443h8v1h-8zM26 455h4v1h-4zM930 455h4v1h-4zM26 467h4v1h-4zM930 467h4v1h-4zM26 479h4v1h-4zM930 479h4v1h-4zM26 491h4v1h-4zM930 491h4v1h-4zM26 503h8v1h-8zM926 503h8v1h-8zM26 515h4v1h-4zM930 515h4v1h-4zM26 527h4v1h-4zM930 527h4v1h-4zM26 539h4v1h-4zM930 539h4v1h-4zM26 551h4v1h-4zM930 551h4v1h-4zM26 563h8v1h-8zM926 563h8v1h-8zM26 575h4v1h-4zM930 575h4v1h-4zM26 587h4v1h-4zM930 587h4v1h-4zM26 599h4v1h-4zM930 599h4v1h-4zM26 611h4v1h-4zM930 611h4v1h-4z" fill="#f4f4f4"/>
</svg>
<svg width="960" height="720" viewBox="0 0 960 720">
<path d="M173 322h161v3.2h-161zM738 322h196v3.2h-196zM334 274.6h405v5.4h-405zM333.3 267h1.6v58h-1.6zM737.7 274.5h1.5v50.7h-1.5zM179.0 325.2h1.5v3.0h-1.5zM187.0 320.0h1.5v2.0h-1.5zM193.0 325.2h1.5v3.0h-1.5zM201.0 320.0h1.5v2.0h-1.5zM206.0 325.2h1.5v2.0h-1.5zM214.0 320.0h1.5v2.0h-1.5zM219.0 325.2h1.5v3.0h-1.5zM225.0 320.0h1.5v2.0h-1.5zM233.0 325.2h1.5v2.0h-1.5zM237.0 320.0h1.5v2.0h-1.5zM245.0 325.2h1.5v3.0h-1.5zM251.0 320.0h1.5v2.0h-1.5zM258.0 325.2h1.5v2.5h-1.5zM265.0 320.0h1.5v2.0h-1.5zM270.0 325.2h1.5v3.0h-1.5zM278.0 325.2h1.5v2.0h-1.5zM283.0 320.0h1.5v2.0h-1.5zM286.0 325.2h1.5v2.0h-1.5zM289.0 319.0h1.5v3.0h-1.5zM294.0 325.2h1.5v3.0h-1.5zM297.0 320.0h1.5v2.0h-1.5zM300.0 325.2h1.5v3.0h-1.5zM307.0 319.0h1.5v3.0h-1.5zM313.0 325.2h1.5v2.0h-1.5zM318.0 319.5h1.5v2.5h-1.5zM323.0 325.2h1.5v2.0h-1.5zM331.0 325.2h1.5v2.0h-1.5zM741.0 319.0h1.5v3.0h-1.5zM745.0 325.2h1.5v2.0h-1.5zM749.0 320.0h1.5v2.0h-1.5zM754.0 325.2h1.5v2.0h-1.5zM758.0 320.0h1.5v2.0h-1.5zM766.0 325.2h1.5v2.5h-1.5zM769.0 325.2h1.5v2.0h-1.5zM777.0 320.0h1.5v2.0h-1.5zM781.0 325.2h1.5v2.0h-1.5zM784.0 319.5h1.5v2.5h-1.5zM789.0 320.0h1.5v2.0h-1.5zM793.0 325.2h1.5v2.0h-1.5zM798.0 319.5h1.5v2.5h-1.5zM802.0 325.2h1.5v3.0h-1.5zM806.0 325.2h1.5v3.0h-1.5zM810.0 319.5h1.5v2.5h-1.5zM818.0 320.0h1.5v2.0h-1.5zM822.0 325.2h1.5v2.0h-1.5zM827.0 319.0h1.5v3.0h-1.5zM832.0 325.2h1.5v2.0h-1.5zM835.0 319.5h1.5v2.5h-1.5zM842.0 325.2h1.5v3.0h-1.5zM850.0 319.0h1.5v3.0h-1.5zM854.0 325.2h1.5v2.0h-1.5zM859.0 320.0h1.5v2.0h-1.5zM863.0 325.2h1.5v2.0h-1.5zM868.0 319.0h1.5v3.0h-1.5zM871.0 325.2h1.5v2.0h-1.5zM877.0 320.0h1.5v2.0h-1.5zM881.0 325.2h1.5v3.0h-1.5zM888.0 325.2h1.5v2.0h-1.5zM891.0 319.0h1.5v3.0h-1.5zM898.0 319.5h1.5v2.5h-1.5zM901.0 320.0h1.5v2.0h-1.5zM908.0 325.2h1.5v2.5h-1.5zM911.0 320.0h1.5v2.0h-1.5zM916.0 325.2h1.5v2.0h-1.5zM923.0 325.2h1.5v2.0h-1.5zM928.0 319.5h1.5v2.5h-1.5zM358.0 272.2h1.6v2.6h-1.6zM364.0 272.2h1.6v2.6h-1.6zM385.0 272.2h1.6v2.6h-1.6zM391.0 272.2h1.6v2.6h-1.6zM407.0 272.2h1.6v2.6h-1.6zM410.0 272.2h1.6v2.6h-1.6zM433.0 272.2h1.6v2.6h-1.6zM438.0 272.2h1.6v2.6h-1.6zM454.0 272.2h1.6v2.6h-1.6zM459.0 272.2h1.6v2.6h-1.6zM485.0 272.2h1.6v2.6h-1.6zM497.0 272.2h1.6v2.6h-1.6zM500.0 272.2h1.6v2.6h-1.6zM530.0 272.2h1.6v2.6h-1.6zM537.0 272.2h1.6v2.6h-1.6zM546.0 272.2h1.6v2.6h-1.6zM552.0 272.2h1.6v2.6h-1.6zM558.0 272.2h1.6v2.6h-1.6zM567.0 272.2h1.6v2.6h-1.6zM571.0 272.2h1.6v2.6h-1.6zM577.0 272.2h1.6v2.6h-1.6zM583.0 272.2h1.6v2.6h-1.6zM586.0 272.2h1.6v2.6h-1.6zM595.0 272.2h1.6v2.6h-1.6zM598.0 272.2h1.6v2.6h-1.6zM614.0 272.2h1.6v2.6h-1.6zM617.0 272.2h1.6v2.6h-1.6zM620.0 272.2h1.6v2.6h-1.6zM633.0 272.2h1.6v2.6h-1.6zM636.0 272.2h1.6v2.6h-1.6zM639.0 272.2h1.6v2.6h-1.6zM683.0 272.2h1.6v2.6h-1.6zM693.0 272.2h1.6v2.6h-1.6zM706.0 272.2h1.6v2.6h-1.6zM715.0 272.2h1.6v2.6h-1.6zM731.0 272.2h1.6v2.6h-1.6z" fill="#f0f000"/>
<path d="M338.0 277.4h1.6v2.6h-1.6zM346.0 277.4h1.6v2.6h-1.6zM354.0 277.4h1.6v2.6h-1.6zM361.0 277.4h1.6v2.6h-1.6zM367.0 277.4h1.6v2.6h-1.6zM375.0 277.4h1.6v2.6h-1.6zM383.0 277.4h1.6v2.6h-1.6zM389.0 277.4h1.6v2.6h-1.6zM396.0 277.4h1.6v2.6h-1.6zM404.0 277.4h1.6v2.6h-1.6zM412.0 277.4h1.6v2.6h-1.6zM422.0 277.4h1.6v2.6h-1.6zM429.0 277.4h1.6v2.6h-1.6zM434.0 277.4h1.6v2.6h-1.6zM440.0 277.4h1.6v2.6h-1.6zM448.0 277.4h1.6v2.6h-1.6zM458.0 277.4h1.6v2.6h-1.6zM463.0 277.4h1.6v2.6h-1.6zM470.0 277.4h1.6v2.6h-1.6zM476.0 277.4h1.6v2.6h-1.6zM488.0 277.4h1.6v2.6h-1.6zM493.0 277.4h1.6v2.6h-1.6zM498.0 277.4h1.6v2.6h-1.6zM504.0 277.4h1.6v2.6h-1.6zM510.0 277.4h1.6v2.6h-1.6zM516.0 277.4h1.6v2.6h-1.6zM521.0 277.4h1.6v2.6h-1.6zM533.0 277.4h1.6v2.6h-1.6zM540.0 277.4h1.6v2.6h-1.6zM547.0 277.4h1.6v2.6h-1.6zM559.0 277.4h1.6v2.6h-1.6zM566.0 277.4h1.6v2.6h-1.6zM572.0 277.4h1.6v2.6h-1.6zM582.0 277.4h1.6v2.6h-1.6zM590.0 277.4h1.6v2.6h-1.6zM595.0 277.4h1.6v2.6h-1.6zM603.0 277.4h1.6v2.6h-1.6zM615.0 277.4h1.6v2.6h-1.6zM625.0 277.4h1.6v2.6h-1.6zM630.0 277.4h1.6v2.6h-1.6zM640.0 277.4h1.6v2.6h-1.6zM650.0 277.4h1.6v2.6h-1.6zM657.0 277.4h1.6v2.6h-1.6zM669.0 277.4h1.6v2.6h-1.6zM675.0 277.4h1.6v2.6h-1.6zM687.0 277.4h1.6v2.6h-1.6zM697.0 277.4h1.6v2.6h-1.6zM705.0 277.4h1.6v2.6h-1.6zM710.0 277.4h1.6v2.6h-1.6zM718.0 277.4h1.6v2.6h-1.6zM730.0 277.4h1.6v2.6h-1.6z" fill="#000"/>
<path d="M334.2 267.5 L336.5 273.5 L339 275" stroke="#f0f000" stroke-width="1.6" fill="none"/>
</svg>
<!-- top bar -->
<div class="t" style="left:29.5px;top:5px;color:#061a58;letter-spacing:1.3px;-webkit-text-stroke:0.4px #061a58">AKTAKOM</div>
<div class="a" style="left:144px;top:1px;width:96px;height:22px;border-radius:8px/11px;background:#f00000"></div>
<div class="t" style="left:167px;top:4px;color:#500000;letter-spacing:1.3px;-webkit-text-stroke:0.4px #500000">Stop</div>
<div class="a" style="left:299px;top:1px;width:360px;height:22px;border-radius:8px/11px;background:#000"></div>
<svg width="960" height="30" viewBox="0 0 960 30"><rect x="312" y="10.5" width="337" height="1.6" fill="#bcbc50"/></svg>
<svg width="960" height="30" viewBox="0 0 960 30">
<path d="M357 3.3 H354 V23" stroke="#cccccc" stroke-width="1.8" fill="none"/>
<path d="M603.2 3.3 H606.2 V23" stroke="#cccccc" stroke-width="1.8" fill="none"/>
<path d="M436.3 3.5 H442.8 M439.6 3.5 V7.8" stroke="#d428d4" stroke-width="2" fill="none"/>
</svg>
<div class="a" style="left:672px;top:1px;width:129px;height:22px;border-radius:8px/11px;background:#000"></div>
<svg width="960" height="30" viewBox="0 0 960 30">
<path d="M677.2 4.2 H691 V16.8 Q684.1 21.5 677.2 16.8 Z" stroke="#8a2cd0" stroke-width="1.8" fill="#000"/>
<path d="M679 8.8 H689 M684 8.8 V16.4" stroke="#b040e8" stroke-width="2" fill="none"/>
</svg>
<div class="t" style="left:695px;top:6px;color:#e0e0e0;">960.0ms</div>
<div class="a" style="left:820px;top:1px;width:71px;height:22px;border-radius:8px/11px;background:#000"></div>
<div class="t" style="left:832px;top:4px;color:#e0e0e0;">8:49</div>
<svg width="960" height="30" viewBox="0 0 960 30">
<path d="M908.5 13 L919 9 L922 16.5 L911.5 20 Z" fill="#1048b0"/>
<path d="M911 15.5 L918.5 12.8 L920 16 L912.5 18.6 Z" fill="#c8a0c0"/>
<path d="M910.5 11 L913 17" stroke="#b0d8c0" stroke-width="1.5"/>
<path d="M906.5 7.5 Q907 3.5 911.5 3.8 Q916 4 915.8 7.5 Q915.5 11 911.5 11.5 Q907 11.5 906.5 7.5 Z" fill="#28b018"/>
<path d="M907.5 7.5 Q908 5 910.5 5 Q911 9 909 10.5 Q907.5 9.5 907.5 7.5 Z" fill="#70e060"/>
</svg>
<!-- left ch2 marker -->
<svg width="40" height="720" viewBox="0 0 40 720">
<path d="M0.5 313.5 H16.5 L23.5 323.5 L16.5 333.5 H0.5 Z" fill="#000" stroke="#d0e020" stroke-width="1.4"/>
</svg>
<div class="t" style="left:4px;top:316px;color:#e0e000;letter-spacing:0">2</div>
<!-- bottom left panels -->
<div class="a" style="left:0;top:623px;width:383px;height:97px;background:#5aacbc"></div>
<div class="a" style="left:0;top:622px;width:24px;height:1px;background:#0080e0"></div>
<div class="a" style="left:0;top:647px;width:254px;height:1px;background:#2f7088"></div>
<div class="a" style="left:2px;top:623px;width:247px;height:24px;border-radius:5px;background:#000"></div>
<div class="a" style="left:2px;top:648px;width:247px;height:23px;border-radius:5px;background:#000"></div>
<div class="a" style="left:254px;top:623px;width:126px;height:48px;border-radius:7px;background:#000"></div>
<div class="a" style="left:1px;top:673px;width:379px;height:44px;border-radius:5px;background:#000"></div>
<div class="a" style="left:249px;top:623px;width:5px;height:48px;background:#30a0dc"></div>
<div class="a" style="left:383px;top:623px;width:577px;height:97px;background:#0080e0"></div>
<svg width="960" height="720" viewBox="0 0 960 720" font-family="Liberation Sans" font-weight="bold" font-size="17" text-anchor="middle">
<circle cx="12.5" cy="636" r="9.8" fill="#ee0000"/><path d="M9.6 634 L13.6 630.6 V642" stroke="#3a0000" stroke-width="2.4" fill="none"/>
<circle cx="12.6" cy="659.5" r="9.7" fill="#e8e800"/><text x="12.6" y="665.6" fill="#101000">2</text>
<circle cx="11.8" cy="684.5" r="9.6" fill="#e8e800"/><text x="11.8" y="690.6" fill="#101000">2</text>
<circle cx="11.8" cy="706.5" r="9.6" fill="#e8e800"/><text x="11.8" y="712.6" fill="#101000">2</text>
<circle cx="201.8" cy="684.5" r="9.6" fill="#e8e800"/><text x="201.8" y="690.6" fill="#101000">2</text>
<circle cx="201.8" cy="706.5" r="9.6" fill="#e8e800"/><text x="201.8" y="712.6" fill="#101000">2</text>
</svg>
<div class="t" style="left:22px;top:629px;color:#c41818;">50.0mV-</div>
<div class="t" style="left:127px;top:629px;color:#c41818;">2.00div</div>
<div class="t" style="left:22px;top:653px;color:#dcdc3c;">2V-</div>
<div class="t" style="left:127px;top:653px;color:#dcdc3c;">0.00div</div>
<div class="t" style="left:258.5px;top:628px;color:#e0e0e0;">(1.25KS/s)</div>
<div class="t" style="left:262px;top:651px;color:#e0e0e0;">Depth:10K</div>
<div class="t" style="left:25.3px;top:676px;color:#dcdc3c;">F:  ?</div>
<div class="t" style="left:25.3px;top:699px;color:#dcdc3c;">+D:11.3%</div>
<div class="t" style="left:216px;top:676px;color:#dcdc3c;">Vk:1.307v</div>
<div class="t" style="left:216px;top:699px;color:#dcdc3c;">V:850.0mv</div>
<!-- menu -->
<div class="a" style="left:383px;top:646px;width:575px;height:71px;background:#0060a0"></div>
<div class="a" style="left:383px;top:623px;width:118px;height:22px;border-radius:8px/11px;background:#000"></div>
<div class="t" style="left:398px;top:627px;color:#e0e0e0;">M:400ms</div>
<div class="a" style="left:798px;top:623px;width:154px;height:22px;border-radius:8px/11px;background:#000"></div>
<svg width="960" height="720" viewBox="0 0 960 720">

<path d="M822 642.4 H832 L837.3 627.2 H846" stroke="#e0e0e0" stroke-width="1.5" fill="none"/>
</svg>
<svg width="960" height="720" viewBox="0 0 960 720" font-family="Liberation Sans" font-weight="bold" font-size="17" text-anchor="middle">
<circle cx="810.8" cy="634.4" r="9.4" fill="#e8e800"/><text x="810.8" y="640.5" fill="#101000">2</text>
</svg>
<div class="t" style="left:848px;top:627px;color:#e0e0e0;">0.00mV</div>
<div class="a" style="left:386px;top:649px;width:109px;height:68px;background:#0044a0;border-radius:2px"></div><div class="a" style="left:388px;top:714px;width:107px;height:2px;background:#003a78"></div><div class="a" style="left:387px;top:649px;width:106px;height:65px;border-radius:3px 3px 0 0;background:#0080e0;border-top:2px solid #55a8f0;border-left:2px solid #3a98e8;box-sizing:border-box"></div>
<div class="a" style="left:716px;top:649px;width:109px;height:68px;background:#0044a0;border-radius:2px"></div><div class="a" style="left:718px;top:714px;width:107px;height:2px;background:#003a78"></div><div class="a" style="left:717px;top:649px;width:106px;height:65px;border-radius:3px 3px 0 0;background:#0080e0;border-top:2px solid #55a8f0;border-left:2px solid #3a98e8;box-sizing:border-box"></div>
<div class="t" style="left:415px;top:660px;color:#002468;letter-spacing:1.2px;-webkit-text-stroke:0.6px #002468">Type</div>
<div class="a" style="left:409px;top:685px;width:60px;height:24px;background:#e8e6e6"></div>
<div class="t" style="left:411px;top:689px;color:#000;letter-spacing:0.9px">Image</div>
<div class="a" style="left:745px;top:674px;font-family:'Liberation Sans',sans-serif;font-size:17px;line-height:17px;letter-spacing:2.1px;color:#002468;-webkit-text-stroke:0.2px #002468;">Save</div>

</body></html>
